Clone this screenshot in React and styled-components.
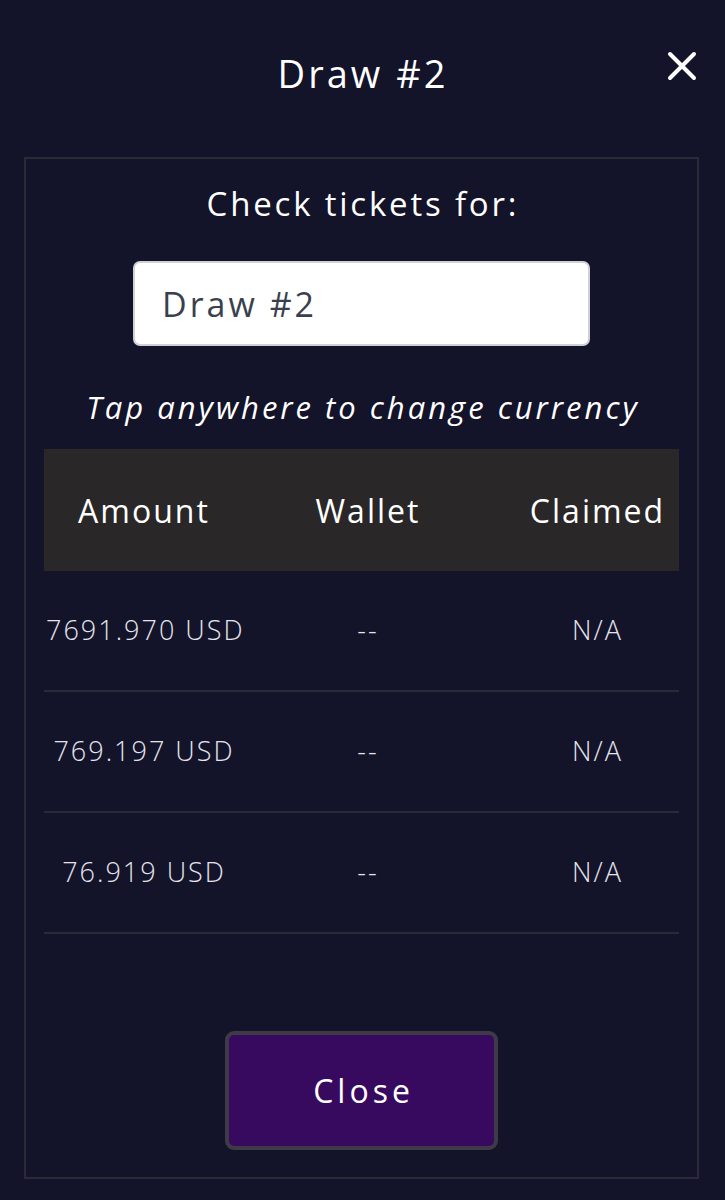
import React from "react";
import styled, { createGlobalStyle } from "styled-components";

const Global = createGlobalStyle`
  html, body {
    margin: 0;
    padding: 0;
    background: #13132a;
  }
  body {
    font-family: "Open Sans", "Noto Sans", sans-serif;
    color: #ffffff;
  }
  * { box-sizing: border-box; }
`;

const Page = styled.div`
  width: 725px;
  min-height: 1200px;
  background: #13132a;
  padding: 0 26px 21px 24px;
  display: flex;
  flex-direction: column;
`;

const Header = styled.header`
  position: relative;
  height: 146px;
  margin-bottom: 11px;
  display: flex;
  align-items: center;
  justify-content: center;
`;

const Title = styled.h1`
  margin: 0;
  font-size: 38px;
  font-weight: 400;
  line-height: 46px;
  letter-spacing: 3px;
  text-indent: 3px;
  color: #ffffff;
`;

const CloseIcon = styled.button`
  position: absolute;
  right: 0;
  top: 49px;
  width: 34px;
  height: 34px;
  padding: 0;
  border: none;
  background: transparent;
  display: flex;
  align-items: center;
  justify-content: center;
  cursor: pointer;
`;

const Panel = styled.section`
  height: 1022px;
  border: 2px solid #2b2b37;
  padding: 25px 18px 27px;
  display: flex;
  flex-direction: column;
  align-items: center;
`;

const Label = styled.div`
  font-size: 33px;
  line-height: 40px;
  font-weight: 400;
  letter-spacing: 2.8px;
  text-indent: 2.8px;
  color: #ffffff;
`;

const Input = styled.input`
  margin-top: 37px;
  width: 457px;
  height: 85px;
  border: 2px solid #cfd0d8;
  border-radius: 7px;
  background: #ffffff;
  padding: 0 27px;
  font-family: inherit;
  font-size: 34px;
  letter-spacing: 3px;
  color: #3a3f4e;
  outline: none;
`;

const Hint = styled.div`
  margin-top: 41px;
  font-size: 31px;
  line-height: 40px;
  font-style: italic;
  letter-spacing: 3px;
  text-indent: 3px;
  color: #ffffff;
`;

const Table = styled.div`
  margin-top: 22px;
  width: 100%;
  display: flex;
  flex-direction: column;
`;

const Row = styled.div`
  display: grid;
  grid-template-columns: 198px 250px 1fr;
  align-items: center;
  height: ${(p) => (p.$head ? "122px" : "121px")};
  background: ${(p) => (p.$head ? "#292727" : "transparent")};
  border-bottom: ${(p) => (p.$head ? "none" : "2px solid #2a2a35")};
  padding-bottom: ${(p) => (p.$head ? "0" : "2px")};
`;

const Cell = styled.div`
  text-align: center;
  padding-left: ${(p) => (p.$last ? "22px" : "0")};
  font-size: ${(p) => (p.$head ? "32px" : "27px")};
  font-weight: ${(p) => (p.$head ? 500 : 300)};
  letter-spacing: 2px;
  text-indent: 2px;
  color: ${(p) => (p.$head ? "#ffffff" : "#e4e4ec")};
  white-space: nowrap;
`;

const Spacer = styled.div`
  flex: 1;
`;

const CloseButton = styled.button`
  width: 273px;
  height: 119px;
  background: #380a5f;
  border: 4px solid #3e3b47;
  border-radius: 9px;
  color: #ffffff;
  font-family: inherit;
  font-size: 32px;
  font-weight: 400;
  letter-spacing: 4px;
  text-indent: 4px;
  cursor: pointer;
`;

const rows = [
  ["7691.970 USD", "--", "N/A"],
  ["769.197 USD", "--", "N/A"],
  ["76.919 USD", "--", "N/A"],
];

export default function App() {
  return (
    <>
      <Global />
      <Page>
        <Header>
          <Title>Draw #2</Title>
          <CloseIcon aria-label="close">
            <svg width="30" height="30" viewBox="0 0 30 30">
              <path
                d="M3 3 L27 27 M27 3 L3 27"
                stroke="#ffffff"
                strokeWidth="4"
                strokeLinecap="round"
              />
            </svg>
          </CloseIcon>
        </Header>
        <Panel>
          <Label>Check tickets for:</Label>
          <Input defaultValue="Draw #2" />
          <Hint>Tap anywhere to change currency</Hint>
          <Table>
            <Row $head>
              <Cell $head>Amount</Cell>
              <Cell $head>Wallet</Cell>
              <Cell $head $last>Claimed</Cell>
            </Row>
            {rows.map((r, i) => (
              <Row key={i}>
                <Cell>{r[0]}</Cell>
                <Cell>{r[1]}</Cell>
                <Cell $last>{r[2]}</Cell>
              </Row>
            ))}
          </Table>
          <Spacer />
          <CloseButton>Close</CloseButton>
        </Panel>
      </Page>
    </>
  );
}
